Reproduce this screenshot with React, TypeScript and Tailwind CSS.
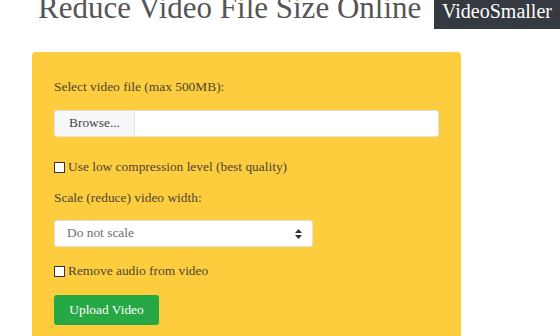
import React from "react";

export default function App() {
  return (
    <div className="w-[560px] h-[336px] overflow-hidden bg-white relative" style={{ fontFamily: '"Liberation Serif", serif' }}>
      <div className="flex items-start">
        <div className="flex-1 pl-[38px]">
          <h1 className="mt-[-8px] text-[31px] leading-[31px] text-[#555555] whitespace-nowrap">
            Reduce Video File Size Online
          </h1>
        </div>
        <div className="w-[126px] h-[29px] bg-[#343a40] text-white text-[20px] leading-[20px] pt-[1px] text-center whitespace-nowrap">
          VideoSmaller
        </div>
      </div>
      <div className="ml-[32px] mt-[23px] w-[429px] h-[300px] bg-[#fecd3d] rounded-[4px] px-[22px] pt-[27px] text-[#4a4536] text-[13.4px]">
        <div className="leading-[16px]">Select video file (max 500MB):</div>
        <div className="mt-[15px] flex h-[27px] rounded-[3px] border border-[#e3e0d5] bg-white overflow-hidden">
          <div className="w-[80px] bg-[#f6f7f9] border-r border-[#e3e3e3] flex items-center justify-center text-[#444]">Browse...</div>
          <div className="flex-1" />
        </div>
        <label className="mt-[23px] flex items-center h-[14px]">
          <span className="w-[11px] h-[11px] border border-[#333] bg-white mr-[3px]" />
          <span>Use low compression level (best quality)</span>
        </label>
        <div className="mt-[16px] leading-[16px]">Scale (reduce) video width:</div>
        <div className="mt-[14px] w-[259px] h-[27px] rounded-[3px] border border-[#e3e0d5] bg-white flex items-center pl-[12px] pr-[10px] text-[#6c6f73]">
          <span className="flex-1">Do not scale</span>
          <svg width="7" height="10" viewBox="0 0 7 10">
            <path d="M3.5 0 L7 4 L0 4 Z" fill="#333" />
            <path d="M0 6 L7 6 L3.5 10 Z" fill="#333" />
          </svg>
        </div>
        <label className="mt-[17px] flex items-center h-[14px]">
          <span className="w-[11px] h-[11px] border border-[#333] bg-white mr-[3px]" />
          <span>Remove audio from video</span>
        </label>
        <div className="mt-[17px] w-[105px] h-[30px] rounded-[3px] bg-[#28a745] text-white flex items-center justify-center">
          Upload Video
        </div>
      </div>
    </div>
  );
}
